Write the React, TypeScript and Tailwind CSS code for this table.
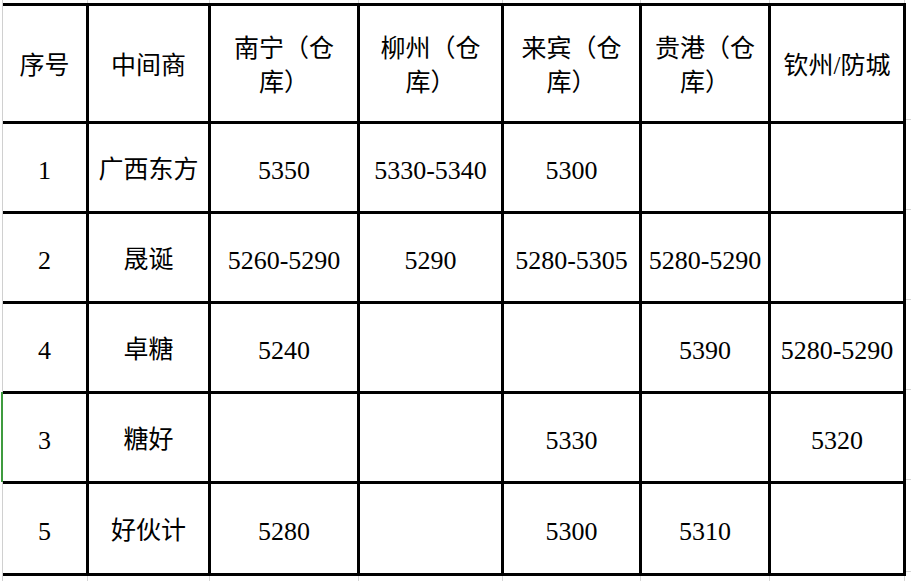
import React from "react"

const headers: string[][] = [
  ["序号"],
  ["中间商"],
  ["南宁（仓", "库）"],
  ["柳州（仓", "库）"],
  ["来宾（仓", "库）"],
  ["贵港（仓", "库）"],
  ["钦州/防城"],
]

const rows: string[][] = [
  ["1", "广西东方", "5350", "5330-5340", "5300", "", ""],
  ["2", "晟诞", "5260-5290", "5290", "5280-5305", "5280-5290", ""],
  ["4", "卓糖", "5240", "", "", "5390", "5280-5290"],
  ["3", "糖好", "", "", "5330", "", "5320"],
  ["5", "好伙计", "5280", "", "5300", "5310", ""],
]

// widths of the faint sheet gridline strips, lined up with the thick borders
const stripCols = [85, 122, 149, 144, 138, 129, 135]
const stripRows = [120, 90, 90, 90, 90, 92]

const App = () => {
  return (
    <div className="flex h-[581px] w-[911px] overflow-hidden bg-white font-[family-name:'Liberation_Serif','Noto_Sans_CJK_SC',serif] text-black">
      {/* left edge gridline, green marker on the selected row */}
      <div className="flex w-[3px] shrink-0 flex-col">
        <div className="ml-[2px] h-[392px] w-px bg-[#d0d0d0]" />
        <div className="ml-[1px] h-[90px] w-[2px] bg-[#3f9b3f]" />
        <div className="ml-[2px] w-px flex-1 bg-[#d0d0d0]" />
      </div>

      <div className="flex shrink-0 flex-col">
        <div className="flex h-[3px]">
          {stripCols.map((w, i) => (
            <div key={i} style={{ width: w }} className="h-full border-r border-[#d6d6d6]" />
          ))}
        </div>

        <div className="grid grid-cols-[83px_119px_146px_141px_135px_126px_132px] grid-rows-[115px_87px_87px_87px_87px_89px] gap-[3px] border-[3px] border-l-0 border-black bg-black">
          {headers.map((lines, i) => (
            <div key={`h${i}`} className="flex flex-col items-center justify-center bg-white pt-[5px] text-[25px] leading-[34px]">
              {lines.map((l, j) => (
                <span key={j} className="whitespace-nowrap">{l}</span>
              ))}
            </div>
          ))}
          {rows.map((r, ri) =>
            r.map((c, ci) => (
              <div
                key={`${ri}-${ci}`}
                className={
                  "flex items-center justify-center whitespace-nowrap bg-white pt-[5px] " +
                  (ci === 1 ? "text-[25px]" : "text-[26px]")
                }
              >
                {c}
              </div>
            ))
          )}
        </div>

        <div className="flex flex-1">
          {stripCols.map((w, i) => (
            <div key={i} style={{ width: w }} className="h-full border-r border-[#d6d6d6]" />
          ))}
        </div>
      </div>

      {/* right edge gridlines */}
      <div className="flex flex-1 flex-col">
        {stripRows.map((h, i) => (
          <div key={i} style={{ height: h }} className="w-full border-b border-[#d6d6d6]" />
        ))}
      </div>
    </div>
  )
}

export default App
